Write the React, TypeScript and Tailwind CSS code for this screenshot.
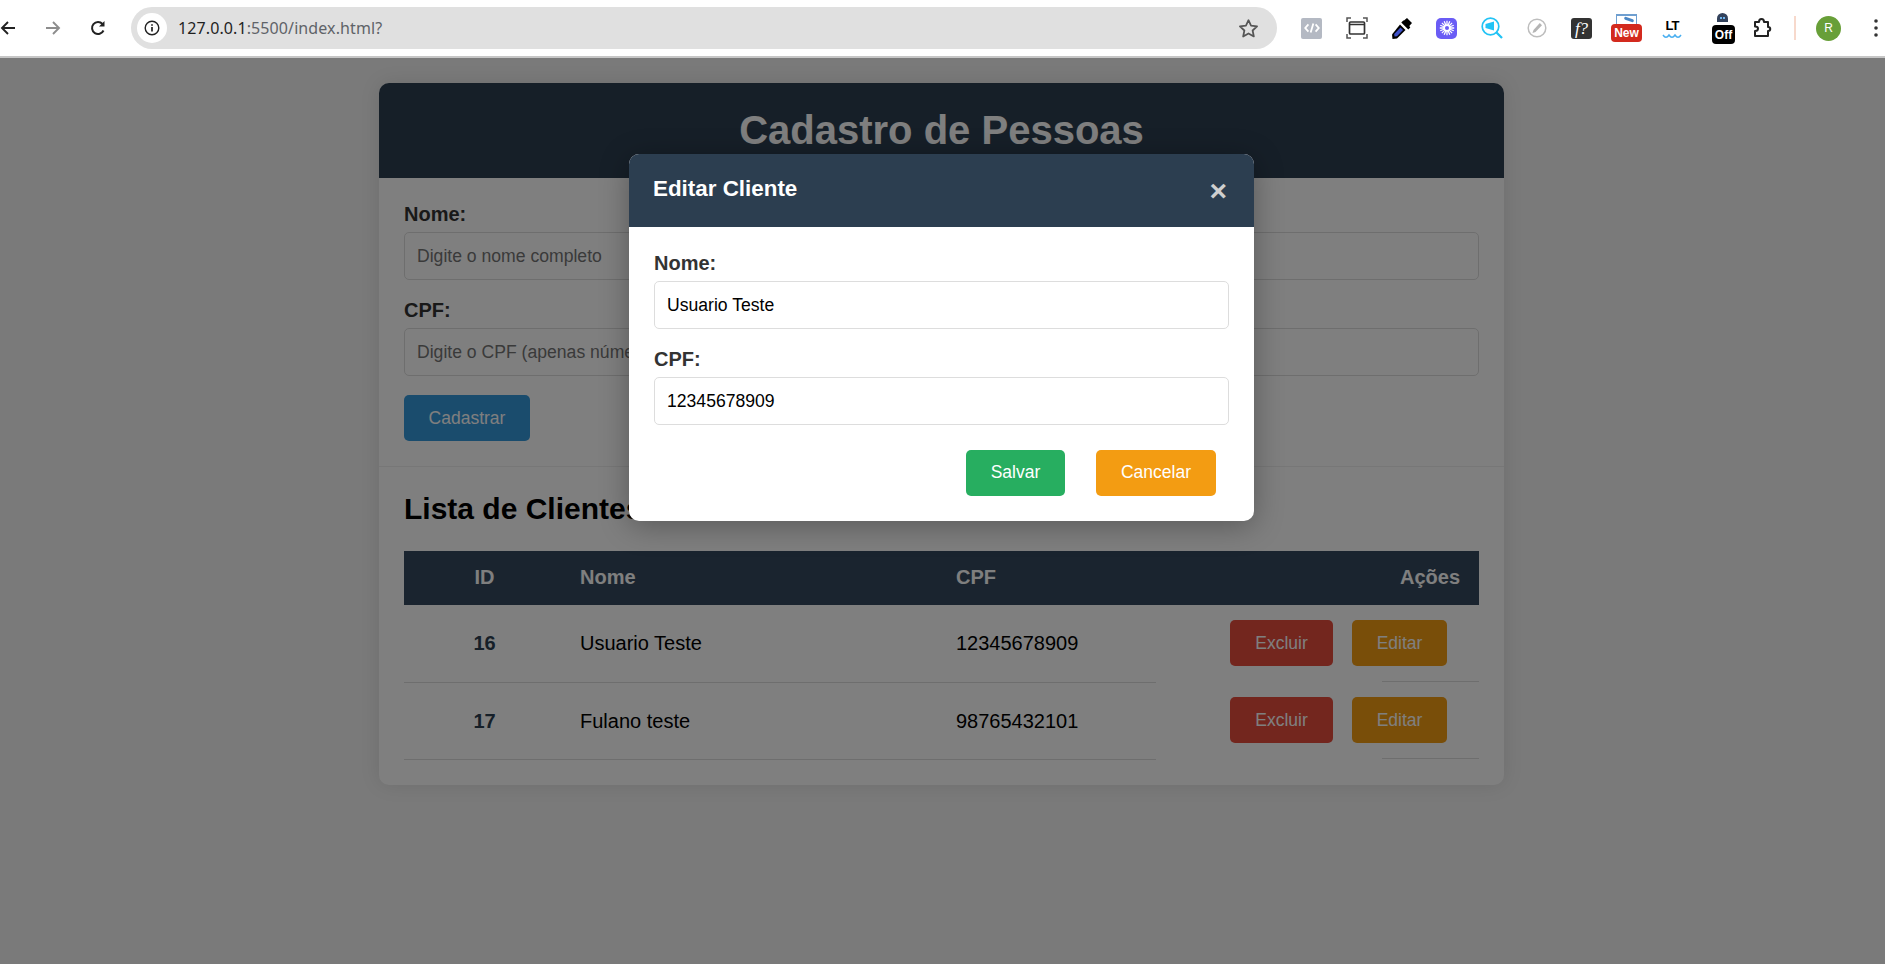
const sans = 'font-["Liberation_Sans",Arial,sans-serif]';

const BackIcon = ({ className }: { className: string }) => (
  <svg viewBox="0 0 16 16" className={className} fill="none" stroke="currentColor" strokeWidth="1.9">
    <path d="M15 8H2M8 2 2 8l6 6" />
  </svg>
);

const ToolbarIcons = () => (
  <>
    {/* code */}
    <div className="ml-[24px] flex h-[21px] w-[21px] items-center justify-center rounded-[2px] bg-[#b4b9c3]">
      <svg viewBox="0 0 20 20" className="h-[18px] w-[18px]" fill="none" stroke="#fff" strokeWidth="2">
        <path d="M6 6 2.500 10 6 14M14 6l3.500 4-3.500 4M11.500 5l-3 10" />
      </svg>
    </div>
    {/* capture */}
    <svg viewBox="0 0 22 22" className="ml-[24px] h-[22px] w-[22px]" fill="none" stroke="#555" strokeWidth="2">
      <path d="M1 5V1h4M17 1h4v4M1 17v4h4M21 17v4h-4" strokeWidth="1.500" />
      <rect x="3.500" y="5" width="15" height="12" rx="1" stroke="#333" strokeWidth="1.700" />
      <path d="M3.500 7.500h15" stroke="#333" strokeWidth="1.500" />
    </svg>
    {/* eyedropper */}
    <svg viewBox="0 0 22 22" className="ml-[23px] h-[22px] w-[22px]">
      <path d="M13 3.500 16 1l5 5-2.700 3 1 1.500-2 2-7-7 2-2z" fill="#000" />
      <path d="M9 7.500 14.500 13 6 21.500l-4.500.5L1 17.500z" fill="#000" />
      <path d="M9.500 10.500 12 13l-6 6.300-2.500.3-.3-2.500z" fill="#3f51c8" />
    </svg>
    {/* purple flake */}
    <div className="ml-[23px] flex h-[21px] w-[21px] items-center justify-center rounded-[5px] bg-[#6a5cf5]">
      <svg viewBox="0 0 20 20" className="h-[18px] w-[18px]" fill="none" stroke="#fff" strokeWidth="1.400">
        <path d="M10 2v16M2 10h16M4.300 4.300l11.400 11.400M15.700 4.300 4.300 15.700M6.900 2.500l6.200 15M13.100 2.500l-6.200 15M2.500 6.900l15 6.200M17.500 6.900l-15 6.200" />
        <circle cx="10" cy="10" r="3" fill="#6a5cf5" stroke="#fff" strokeWidth="1.500" />
      </svg>
    </div>
    {/* magnifier */}
    <svg viewBox="0 0 22 22" className="ml-[24px] h-[22px] w-[22px]" fill="none" stroke="#22c3f5" strokeWidth="1.700">
      <circle cx="9.500" cy="9.500" r="8.300" />
      <path d="m15.500 15.500 5.500 5.500" strokeWidth="2.300" />
      <path d="M4.500 7 13 4.500v9L4.500 11z" fill="#22c3f5" stroke="none" />
    </svg>
    {/* compass */}
    <svg viewBox="0 0 20 20" className="ml-[24px] h-5 w-5" fill="none">
      <circle cx="10" cy="10" r="8.800" stroke="#bdbdbd" strokeWidth="1.500" />
      <path d="m12.800 5 2.200 2.200-6.500 6.800-3 1 1-3z" fill="#b5b5b5" />
    </svg>
    {/* font finder */}
    <div className={`ml-[24px] flex h-[21px] w-[21px] items-center justify-center rounded-[3px] bg-[#333] font-["Liberation_Serif",serif] text-[17px] italic leading-none text-white`}>
      f?
    </div>
    {/* new badge */}
    <div className="relative ml-[19px] h-[28px] w-[31px]">
      <div className="absolute left-[5px] top-0 h-[11px] w-[21px] bg-[#6f9fd0]">
        <div className="mx-[1px] mt-[2px] h-[9px] bg-white" />
        <div className="absolute left-[8px] top-[4px] h-[3px] w-[10px] rotate-[20deg] rounded-full bg-[#4a86c5]" />
      </div>
      <div className={`absolute bottom-0 left-0 flex h-[18px] w-[31px] items-center justify-center rounded-[4px] bg-[#d32a1e] ${sans} text-[12px] font-bold text-white`}>
        New
      </div>
    </div>
    {/* LT */}
    <div className="ml-[20px] flex w-[20px] flex-col items-center">
      <span className={`${sans} text-[13px] font-bold leading-[15px] tracking-[-1px] text-black`}>LT</span>
      <svg viewBox="0 0 20 6" className="h-[6px] w-[20px]" fill="none" stroke="#48aef0" strokeWidth="1.500">
        <path d="M1 2c2 3 4 3 6 0 2 3 4 3 6 0 2 3 4 3 6 0" />
      </svg>
    </div>
    {/* off badge */}
    <div className="relative ml-[30px] h-[32px] w-[23px]">
      <div className="absolute left-[5px] top-[1px] flex h-[9px] w-[11px] items-center justify-center gap-[1px] rounded-t-full bg-[#33425c]">
        <div className="h-[2px] w-[2px] bg-[#6fb6f0]" />
        <div className="h-[2px] w-[2px] bg-[#6fb6f0]" />
      </div>
      <div className={`absolute bottom-0 left-0 flex h-[19px] w-[23px] items-center justify-center rounded-[4px] bg-black ${sans} text-[12px] font-bold text-white`}>
        Off
      </div>
    </div>
    {/* puzzle */}
    <svg viewBox="0 0 22 22" className="ml-[17px] h-[22px] w-[22px]" fill="none" stroke="#222" strokeWidth="2" strokeLinejoin="round">
      <path d="M3 5h4c0-4 5-4 5 0h4v5c3 0 3 4 0 4v5H3v-5c2 0 3-1 3-2.500S5 9.500 3 9.500z" />
    </svg>
    <div className="ml-[20px] h-[24px] w-[2px] bg-[#f7d9cc]" />
    <div className={`ml-[20px] flex h-[25px] w-[25px] items-center justify-center rounded-full bg-[#689f38] ${sans} text-[12px] text-white`}>R</div>
    <svg viewBox="0 0 4 18" className="ml-[33px] h-[18px] w-[4px]" fill="#333">
      <circle cx="2" cy="2" r="1.800" />
      <circle cx="2" cy="9" r="1.800" />
      <circle cx="2" cy="16" r="1.800" />
    </svg>
  </>
);

const BrowserBar = () => (
  <div className="flex h-[58px] items-start border-b-2 border-[#c6c6c6] bg-white pt-[7px]">
    <BackIcon className="ml-0 mt-[13px] h-4 w-4 text-[#222]" />
    <BackIcon className="ml-[29px] mt-[13px] h-4 w-4 rotate-180 text-[#8d8d8d]" />
    <svg viewBox="0 0 16 16" className="ml-[29px] mt-[13px] h-4 w-4" fill="none" stroke="#222" strokeWidth="2">
      <path d="M13.500 10.500A6 6 0 1 1 12.500 4" />
      <path d="M14.500 1v5.500H9z" fill="#222" stroke="none" />
    </svg>
    <div className="ml-[25px] flex h-[42px] w-[1146px] items-center rounded-full bg-[#e0e0e0] pl-[6px] pr-[18px]">
      <div className="flex h-[30px] w-[30px] items-center justify-center rounded-full bg-white">
        <svg viewBox="0 0 16 16" className="h-4 w-4" fill="none" stroke="#222" strokeWidth="1.400">
          <circle cx="8" cy="8" r="6.800" />
          <path d="M8 7v4.500M8 4.200v1.500" strokeWidth="1.700" />
        </svg>
      </div>
      <span className={`ml-[11px] flex-1 font-["Noto_Sans",sans-serif] text-[16px] tracking-[0.1px] text-[#5f6368]`}>
        <span className="text-[#1f1f1f]">127.0.0.1</span>:5500/index.html?
      </span>
      <svg viewBox="0 0 24 24" className="h-[21px] w-[21px]" fill="none" stroke="#555" strokeWidth="2" strokeLinejoin="round">
        <path d="m12 2.500 2.900 6.300 6.900.8-5.100 4.700 1.400 6.800-6.100-3.400-6.100 3.400 1.400-6.800-5.100-4.700 6.900-.8z" />
      </svg>
    </div>
    <div className="flex h-[42px] items-center">
      <ToolbarIcons />
    </div>
  </div>
);

const Field = ({ label, placeholder, value, mt }: { label: string; placeholder?: string; value?: string; mt?: string }) => (
  <div className={mt}>
    <label className="block text-[20px] font-bold leading-[22px] text-[#333]">{label}</label>
    <input
      readOnly
      placeholder={placeholder}
      value={value ?? ''}
      className="mt-[7px] block h-[48px] w-full rounded-[5px] border border-[#ddd] bg-white px-[12px] text-[17.600px] text-black outline-none placeholder:text-[#757575]"
    />
  </div>
);

const ActionButton = ({ label, color }: { label: string; color: string }) => (
  <button className={`h-[46px] rounded-[5px] text-[17.500px] text-white ${color}`}>{label}</button>
);

const clients = [
  { id: 16, nome: 'Usuario Teste', cpf: '12345678909' },
  { id: 17, nome: 'Fulano teste', cpf: '98765432101' },
];

const ClientRow = ({ id, nome, cpf }: { id: number; nome: string; cpf: string }) => (
  <tr>
    <td className="border-b border-[#ddd] text-center align-middle font-bold text-[#2c3e50]">{id}</td>
    <td className="border-b border-[#ddd] pl-[15px] align-middle">{nome}</td>
    <td className="border-b border-[#ddd] pl-[15px] align-middle">{cpf}</td>
    <td className="p-0 align-top">
      <div className="flex justify-end gap-[19px] pr-[32px] pt-[15px] pb-[15px]">
        <ActionButton label="Excluir" color="w-[103px] bg-[#e74c3c]" />
        <ActionButton label="Editar" color="w-[95px] bg-[#f39c12]" />
      </div>
      <div className="ml-auto w-[97px] border-b border-[#ddd]" />
    </td>
  </tr>
);

export default function App() {
  return (
    <div className={`h-[964px] overflow-hidden ${sans}`}>
      <BrowserBar />

      <div className="relative h-[906px] bg-[#f4f4f4] pt-[25px]">
        <div className="ml-[379px] w-[1125px] rounded-[10px] bg-white shadow-[0_0_20px_rgba(0,0,0,0.1)]">
          <header className="flex h-[95px] items-start justify-center rounded-t-[10px] bg-[#2c3e50] pt-[24px] text-[40px] font-bold leading-[46px] text-white">
            Cadastro de Pessoas
          </header>

          <section className="border-b border-[#eee] px-[25px] pb-[25px] pt-[25px]">
            <Field label="Nome:" placeholder="Digite o nome completo" />
            <Field label="CPF:" placeholder="Digite o CPF (apenas números)" mt="mt-[19px]" />
            <button className="mt-[19px] block h-[46px] w-[126px] rounded-[5px] bg-[#3498db] text-[17.500px] text-white">Cadastrar</button>
          </section>

          <section className="px-[25px] pb-[25px] pt-[25px]">
            <h2 className="text-[30px] font-bold leading-[34px] text-black">Lista de Clientes</h2>
            <table className="mt-[25px] w-[1075px] table-fixed border-collapse text-[20px] text-black">
              <colgroup>
                <col className="w-[161px]" />
                <col className="w-[376px]" />
                <col className="w-[215px]" />
                <col className="w-[323px]" />
              </colgroup>
              <thead>
                <tr className="h-[54px] bg-[#34495e] font-bold text-white">
                  <th className="pb-[3px] text-center">ID</th>
                  <th className="pb-[3px] pl-[15px] text-left">Nome</th>
                  <th className="pb-[3px] pl-[15px] text-left">CPF</th>
                  <th className="pb-[3px] pr-[19px] text-right">Ações</th>
                </tr>
              </thead>
              <tbody>
                {clients.map((c) => (
                  <ClientRow key={c.id} {...c} />
                ))}
              </tbody>
            </table>
          </section>
        </div>

        <div className="absolute inset-0 bg-black/50">
          <div className="absolute left-[629px] top-[96px] w-[625px] overflow-hidden rounded-[10px] bg-white shadow-[0_5px_30px_rgba(0,0,0,0.3)]">
            <div className="flex h-[73px] items-center justify-between bg-[#2c3e50] pl-[24px] pr-[27px]">
              <h3 className="mb-[3px] text-[22.400px] font-bold text-white">Editar Cliente</h3>
              <span className="text-[30px] font-bold leading-none text-[#cfcfcf]">×</span>
            </div>
            <div className="px-[25px] pt-[25px] pb-[25px]">
              <Field label="Nome:" value="Usuario Teste" />
              <Field label="CPF:" value="12345678909" mt="mt-[19px]" />
              <div className="mt-[25px] flex justify-end gap-[31px] pr-[13px]">
                <ActionButton label="Salvar" color="w-[99px] pb-[2px] bg-[#27ae60]" />
                <ActionButton label="Cancelar" color="w-[120px] pb-[2px] bg-[#f39c12]" />
              </div>
            </div>
          </div>
        </div>
      </div>
    </div>
  );
}
